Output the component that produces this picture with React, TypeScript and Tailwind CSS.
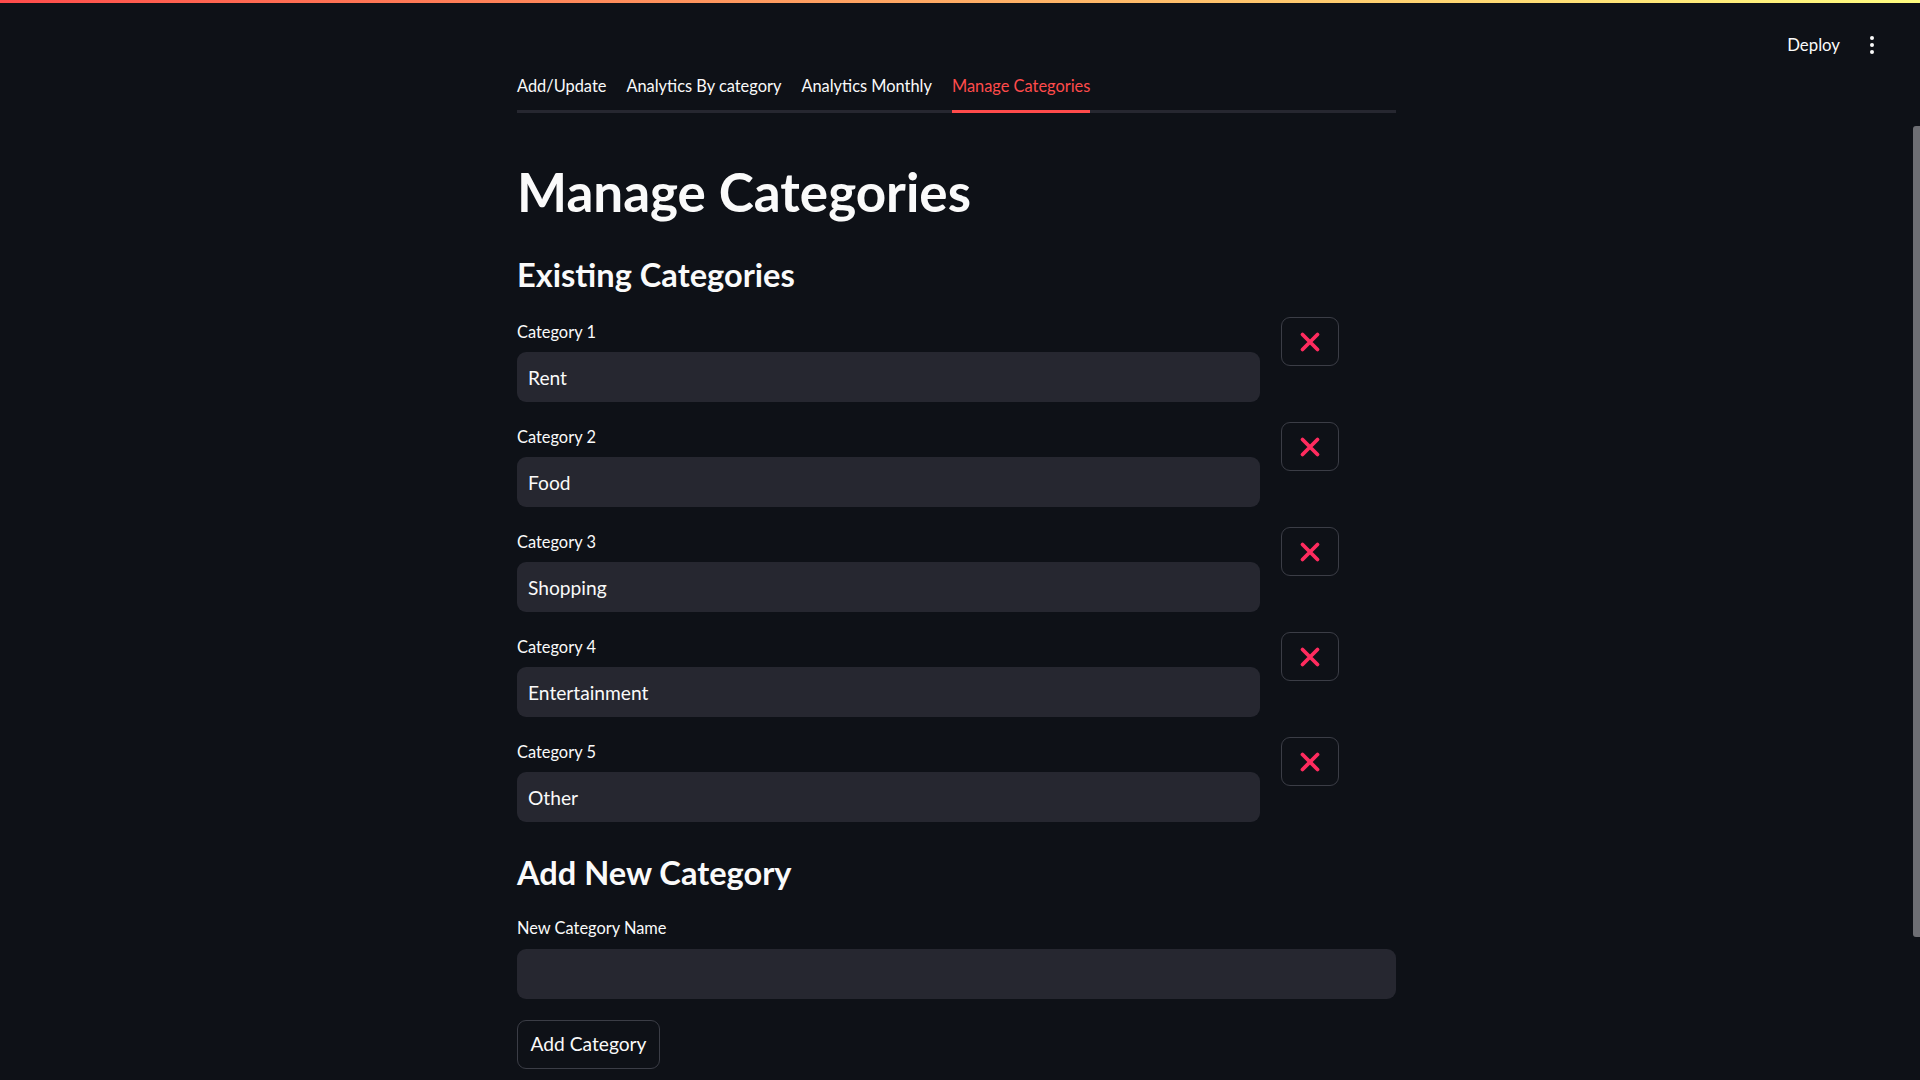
import { useState } from "react";

const TABS = ["Add/Update", "Analytics By category", "Analytics Monthly", "Manage Categories"];
const CATEGORIAS = ["Rent", "Food", "Shopping", "Entertainment", "Other"];

const FONTE = "font-['Lato','Noto_Sans',sans-serif]";

function IconeX() {
  return (
    <svg width="22" height="22" viewBox="0 0 22 22" fill="none">
      <path d="M3.5 3.5L18.5 18.5M18.5 3.5L3.5 18.5" stroke="#ff2b5e" strokeWidth="3.8" strokeLinecap="round" />
    </svg>
  );
}

function LinhaCategoria({ indice, valor }: { indice: number; valor: string }) {
  const [texto, setTexto] = useState(valor);
  return (
    <div className="flex items-start gap-[21px]">
      <div className="flex w-[743px] flex-col pt-[4px]">
        <label className="text-[16.4px] leading-[22px] text-[#fafafa]">Category {indice}</label>
        <input
          value={texto}
          onChange={(e) => setTexto(e.target.value)}
          className="mt-[9px] h-[50px] rounded-[9px] bg-[#262730] px-[11px] text-[19.2px] text-[#fafafa] outline-none"
        />
      </div>
      <button
        type="button"
        className="flex h-[49px] w-[58px] items-center justify-center rounded-[9px] border border-[#3b3d46] bg-[#0e1117]"
      >
        <IconeX />
      </button>
    </div>
  );
}

export default function App() {
  const [novo, setNovo] = useState("");
  return (
    <div className={`flex h-[1080px] flex-col overflow-hidden bg-[#0e1117] text-[#fafafa] ${FONTE}`}>
      <div className="h-[3px] bg-gradient-to-r from-[#ff4b4b] to-[#fffd80]" />

      <header className="flex h-[62px] items-end justify-end gap-[30px] pb-[9px] pr-[46px]">
        <span className="text-[16.8px] leading-[22px]">Deploy</span>
        <span className="flex h-[22px] flex-col items-center justify-center gap-[3px]">
          <span className="h-[4px] w-[4px] rounded-full bg-[#fafafa]" />
          <span className="h-[4px] w-[4px] rounded-full bg-[#fafafa]" />
          <span className="h-[4px] w-[4px] rounded-full bg-[#fafafa]" />
        </span>
      </header>

      <div className="flex flex-1">
        <main className="flex flex-1 justify-center">
          <div className="flex w-[879px] flex-col">
            <nav className="flex gap-[20px] border-b-[3px] border-[#262730]">
              {TABS.map((aba) => {
                const ativa = aba === "Manage Categories";
                return (
                  <button
                    key={aba}
                    type="button"
                    className={
                      ativa
                        ? "-mb-[3px] border-b-[3px] border-[#ff4b4b] pb-[13px] pt-[10px] text-[16.4px] leading-[22px] text-[#ff4b4b]"
                        : "pb-[13px] pt-[10px] text-[16.4px] leading-[22px] text-[#fafafa]"
                    }
                  >
                    {aba}
                  </button>
                );
              })}
            </nav>

            <h1 className="mt-[47px] text-[53px] font-bold leading-[64px]">Manage Categories</h1>

            <h3 className="mt-[29px] text-[32.6px] font-bold leading-[44px]">Existing Categories</h3>

            <div className="mt-[20px] flex flex-col gap-[20px]">
              {CATEGORIAS.map((c, i) => (
                <LinhaCategoria key={c} indice={i + 1} valor={c} />
              ))}
            </div>

            <h3 className="mt-[29px] text-[32.6px] font-bold leading-[44px]">Add New Category</h3>

            <label className="mt-[22px] text-[16.4px] leading-[22px]">New Category Name</label>
            <input
              value={novo}
              onChange={(e) => setNovo(e.target.value)}
              className="mt-[10px] h-[50px] rounded-[9px] bg-[#262730] px-[11px] text-[19.2px] text-[#fafafa] outline-none"
            />

            <div className="mt-[21px]">
              <button
                type="button"
                className="h-[49px] w-[143px] rounded-[9px] border border-[#3b3d46] bg-[#0e1117] text-[19.2px] text-[#fafafa]"
              >
                Add Category
              </button>
            </div>
          </div>
        </main>

        <div className="w-[7px] pt-[61px]">
          <div className="h-[811px] rounded-l-[3px] bg-[#6d6e73]" />
        </div>
      </div>
    </div>
  );
}
